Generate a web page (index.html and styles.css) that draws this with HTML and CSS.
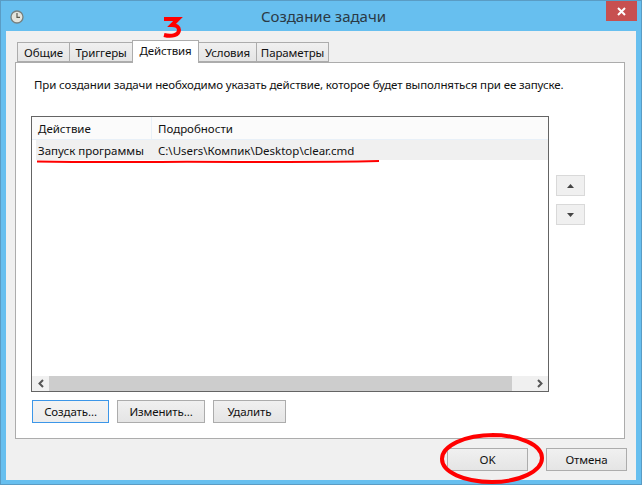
FILE: index.html
```html
<!DOCTYPE html>
<html lang="ru">
<head>
<meta charset="utf-8">
<title>Создание задачи</title>
<link rel="stylesheet" href="styles.css">
</head>
<body>
<div class="window">
  <header class="titlebar">
    <svg class="app-icon" width="14" height="14" viewBox="0 0 14 14"><circle cx="7" cy="7" r="6" fill="#e4e4dc" stroke="#77807f" stroke-width="1.3"/><path d="M7 3v4.3h3" fill="none" stroke="#5a5a50" stroke-width="1.2"/></svg>
    <div class="title">Создание задачи</div>
    <div class="close"><svg width="9" height="9" viewBox="0 0 9 9"><path d="M1 1l7 7M8 1L1 8" stroke="#fff" stroke-width="2"/></svg></div>
  </header>
  <main class="client">
    <nav class="tabs">
      <div class="tab t1">Общие</div>
      <div class="tab t2">Триггеры</div>
      <div class="tab active">Действия</div>
      <div class="tab t4">Условия</div>
      <div class="tab t5">Параметры</div>
    </nav>
    <section class="panel">
      <p class="intro">При создании задачи необходимо указать действие, которое будет выполняться при ее запуске.</p>
      <div class="list-row">
        <div class="list">
          <div class="list-head">
            <div class="col-a">Действие</div>
            <div class="col-b">Подробности</div>
          </div>
          <div class="list-item">
            <div class="col-a">Запуск программы</div>
            <div class="col-b">C:\Users\Компик\Desktop\clear.cmd</div>
          </div>
          <div class="list-body"></div>
          <div class="hscroll">
            <div class="arrow"><svg width="8" height="9" viewBox="0 0 8 9"><path d="M6 1L2.500 4.500 6 8" fill="none" stroke="#555" stroke-width="2"/></svg></div>
            <div class="thumb"></div>
            <div class="track"></div>
            <div class="arrow"><svg width="8" height="9" viewBox="0 0 8 9"><path d="M2 1l3.500 3.500L2 8" fill="none" stroke="#555" stroke-width="2"/></svg></div>
          </div>
        </div>
        <div class="updown">
          <div class="mini"><svg width="7" height="4" viewBox="0 0 7 4"><path d="M3.500 0L7 4H0z" fill="#444"/></svg></div>
          <div class="mini"><svg width="7" height="4" viewBox="0 0 7 4"><path d="M0 0h7L3.500 4z" fill="#444"/></svg></div>
        </div>
      </div>
      <div class="actions">
        <button class="btn focus w-create">Создать...</button>
        <button class="btn w-edit">Изменить...</button>
        <button class="btn w-del">Удалить</button>
      </div>
    </section>
    <footer class="footer">
      <button class="btn w-ok">OK</button>
      <button class="btn w-ok">Отмена</button>
    </footer>
  </main>
  <svg class="marks" width="642" height="485" viewBox="0 0 642 485">
    <path d="M164 19h14l-6 6c4 0 7 2 7 5 0 5-7 7-15 5" fill="none" stroke="#f00" stroke-width="4"/>
    <path d="M37 161.500c60 1 100 .5 150 .3 70 0 130 .7 192-.8" fill="none" stroke="#f00" stroke-width="2"/>
    <path d="M492 435c28 0 50 10 50 23 0 13-22 24-50 24-28 0-50-10-50-23 0-13 22-24 52-24" fill="none" stroke="#f00" stroke-width="4"/>
  </svg>
</div>
</body>
</html>
```
FILE: styles.css
```css
* { box-sizing: border-box; }
html, body { margin: 0; padding: 0; }
body { width: 642px; height: 485px; overflow: hidden; font: 11.5px/16px "Noto Sans", "Open Sans", sans-serif; letter-spacing: -0.12px; color: #111; }
.window { position: relative; width: 642px; height: 485px; background: #67bfef; border: 1px solid #5a9cc4; display: flex; flex-direction: column; padding: 0 5px 5px; }
.titlebar { height: 30px; flex: none; display: flex; align-items: center; position: relative; }
.app-icon { margin: 1px 0 0 4px; }
.title { position: absolute; left: 0; right: 0; top: 5px; text-align: center; font-size: 15px; line-height: 20px; letter-spacing: 0; color: #2b3a45; padding-left: 5px; }
.close { position: absolute; right: -1px; top: 0; width: 31px; height: 20px; background: #c75050; display: flex; align-items: center; justify-content: center; }
.client { flex: 1; background: #f0f0f0; padding: 11px 9px 9px 9px; display: flex; flex-direction: column; }
.tabs { display: flex; height: 20px; flex: none; padding-left: 2px; position: relative; z-index: 1; }
.tab { height: 20px; border: 1px solid #acacac; border-right: 0; background: linear-gradient(#f0f0f0, #e5e5e5); line-height: 16px; padding-top: 2px; text-align: center; }
.t1 { width: 52px; }
.t2 { width: 63px; }
.t4 { width: 57px; border-left: 0; }
.t5 { width: 73px; border-right: 1px solid #acacac; }
.tab.active { width: 67px; height: 23px; margin-top: -2px; padding-top: 2px; border: 1px solid #acacac; border-bottom: 0; background: #fff; position: relative; z-index: 2; }
.panel { width: 610px; height: 377px; flex: none; background: #fff; border: 1px solid #acacac; padding: 14px 15px 0 15px; }
.intro { margin: 0; height: 39px; padding-left: 3px; }
.list-row { display: flex; align-items: flex-start; }
.list { width: 518px; height: 276px; border: 1px solid #646464; background: #fff; display: flex; flex-direction: column; flex: none; letter-spacing: 0; }
.list-head { height: 23px; flex: none; display: flex; background: #fbfbfb; border-bottom: 1px solid #e8f0f8; }
.list-head .col-a { border-right: 1px solid #e8f0f8; }
.col-a { width: 120px; flex: none; padding: 4px 0 0 6px; }
.col-b { flex: 1; padding: 4px 0 0 6px; }
.list-item { height: 20px; flex: none; display: flex; background: #f0f0f0; margin-left: 4px; }
.list-item .col-a { width: 116px; padding: 3px 0 0 2px; }
.list-item .col-b { padding-top: 3px; }
.list-body { flex: 1; }
.hscroll { height: 15px; flex: none; display: flex; background: #f0f0f0; }
.arrow { width: 17px; flex: none; display: flex; align-items: center; justify-content: center; }
.thumb { flex: 1; background: #cdcdcd; }
.track { width: 19px; flex: none; }
.updown { display: flex; flex-direction: column; gap: 8px; margin: 59px 0 0 7px; }
.mini { width: 29px; height: 21px; background: #f0f0f0; border: 1px solid #d9d9d9; display: flex; align-items: center; justify-content: center; }
.actions { display: flex; gap: 8px; margin: 8px 0 0 1px; }
.btn { height: 23px; padding: 0; font: inherit; letter-spacing: inherit; color: #111; border: 1px solid #acacac; background: linear-gradient(#f0f0f0, #e5e5e5); }
.btn.focus { border-color: #3c96e8; background: linear-gradient(#f3f3f3, #ececec); }
.w-create { width: 77px; }
.w-edit { width: 88px; }
.w-del { width: 73px; }
.footer { display: flex; justify-content: flex-end; gap: 18px; margin-top: 9px; }
.w-ok { width: 81px; }
.marks { position: absolute; left: -1px; top: -1px; pointer-events: none; z-index: 5; }
```
